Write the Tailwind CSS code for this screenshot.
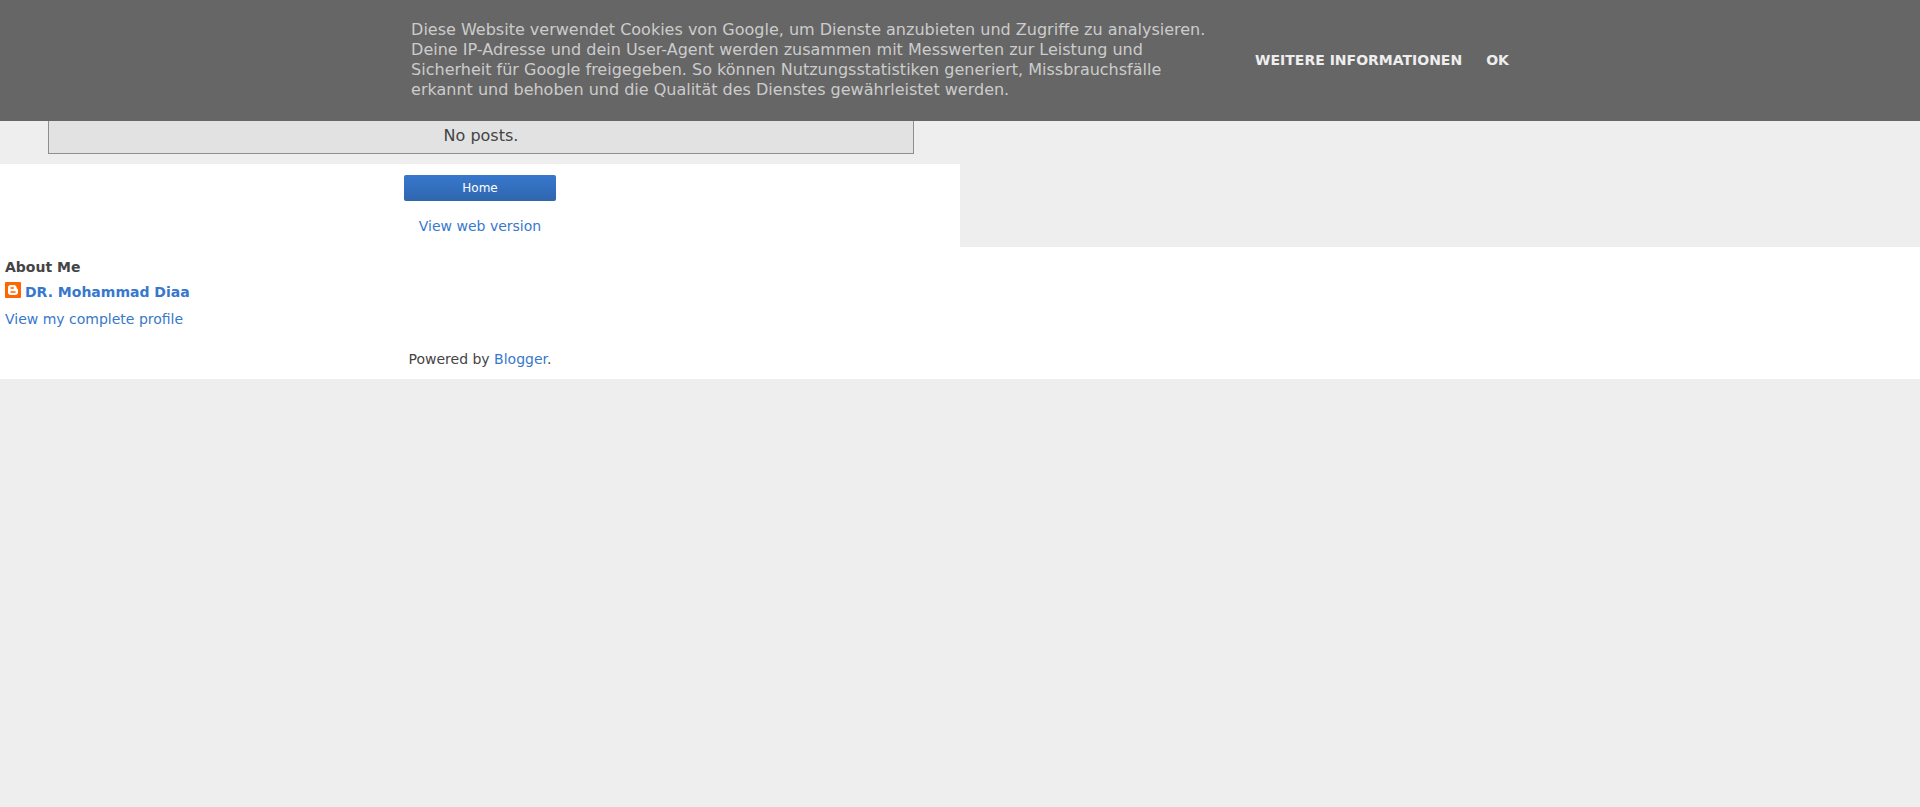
<!DOCTYPE html>
<html lang="de">
<head>
<meta charset="utf-8">
<meta name="viewport" content="width=device-width, initial-scale=1">
<title>Blog</title>
<script src="https://cdn.jsdelivr.net/npm/@tailwindcss/browser@4"></script>
</head>
<body class="bg-[#eeeeee] font-['DejaVu_Sans',sans-serif] text-sm text-[#444444]">
<header class="flex items-center justify-center gap-12 bg-[#666666] px-4 pt-5 pb-[21px]">
  <p class="max-w-[796px] text-base leading-5 text-[#cccccc]">Diese Website verwendet Cookies von Google, um Dienste anzubieten und Zugriffe zu analysieren. Deine IP-Adresse und dein User-Agent werden zusammen mit Messwerten zur Leistung und Sicherheit für Google freigegeben. So können Nutzungsstatistiken generiert, Missbrauchsfälle erkannt und behoben und die Qualität des Dienstes gewährleistet werden.</p>
  <nav class="flex shrink-0 gap-6 font-bold text-[#eeeeee]">
    <a href="#info">WEITERE INFORMATIONEN</a>
    <a href="#ok">OK</a>
  </nav>
</header>
<main class="w-1/2">
  <section class="pb-2.5">
    <div class="ml-[5%] box-content w-[90%] border border-t-0 border-[#8e8e8e] bg-[#e2e2e2] pt-[3px] pb-[5px] text-center text-base">No posts.</div>
  </section>
  <nav class="flex flex-col items-center gap-[15px] bg-white pt-[11px] pb-[11px]">
    <a href="#home" class="w-[152px] rounded-xs bg-linear-to-b from-[#3778cd] to-[#2f66ae] text-center text-xs leading-[26px] text-white">Home</a>
    <a href="#web" class="text-[#3778cd]">View web version</a>
  </nav>
</main>
<footer class="bg-white pt-2.5 pb-2.5">
  <section class="flex flex-col items-start px-[5px]">
    <h2 class="font-bold">About Me</h2>
    <a href="#profile" class="mt-[5px] flex items-center gap-1 font-bold text-[#3778cd]">
      <svg class="size-4 -translate-y-0.5" viewBox="0 0 16 16" aria-hidden="true">
        <rect width="16" height="16" rx="1" fill="#ff6600"/>
        <path fill="#fff" fill-rule="evenodd" d="M5.500 3H8.700C10.600 3 11.600 4.200 11.700 5.800C11.800 6.700 12.100 6.700 12.600 6.900C13 7.100 13 7.300 13 7.800V10.200C13 11.900 11.900 13 10.200 13H5.800C4.100 13 3 11.900 3 10.200V5.700C3 4.100 4 3 5.500 3ZM6 5.300C5 5.300 5 6.700 6 6.700H8.300C9.300 6.700 9.300 5.300 8.300 5.300ZM6 9.300C5 9.300 5 10.700 6 10.700H10C11 10.700 11 9.300 10 9.300Z"/>
      </svg>
      DR. Mohammad Diaa
    </a>
    <a href="#complete" class="mt-[7px] text-[#3778cd]">View my complete profile</a>
  </section>
  <p class="mt-5 w-1/2 text-center">Powered by <a href="#blogger" class="text-[#3778cd]">Blogger</a>.</p>
</footer>
</body>
</html>
